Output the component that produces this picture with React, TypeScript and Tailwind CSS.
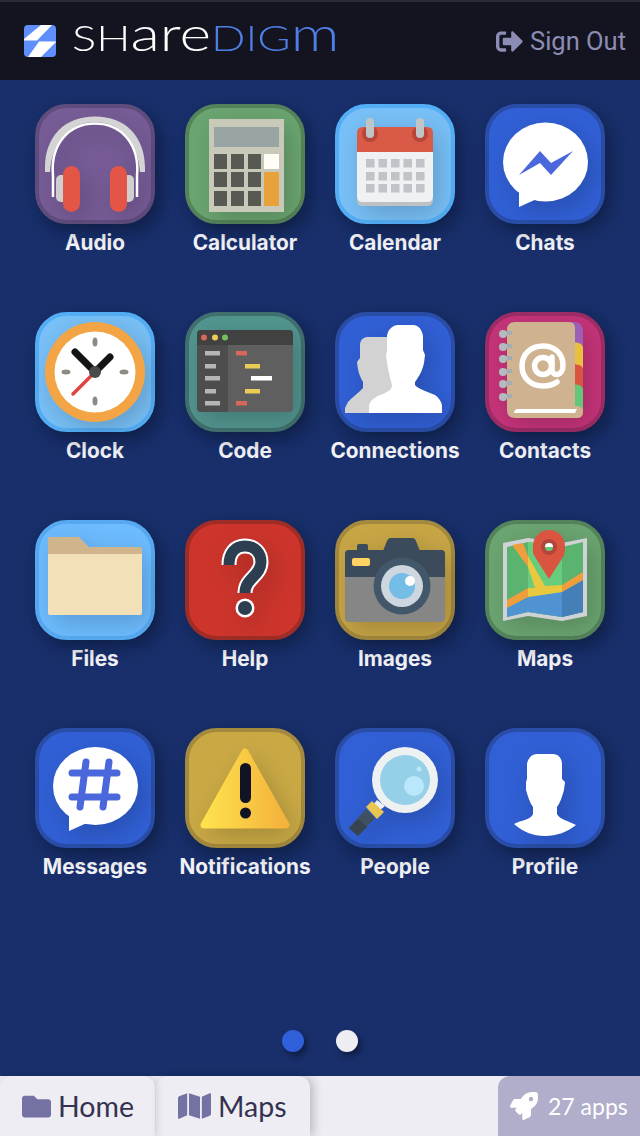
import type { ReactNode } from "react";
import { FaFolder, FaMap, FaRocket, FaSignOutAlt } from "react-icons/fa";

const BLUE = "bg-[#3160d6] border-[#2a4ea8]";

function Svg({ children }: { children: ReactNode }) {
  return (
    <svg viewBox="0 0 120 120" className="absolute -inset-[4px] h-[120px] w-[120px] drop-shadow-[6px_8px_12px_rgba(0,0,0,0.18)]">
      {children}
    </svg>
  );
}

function AudioIcon() {
  return (
    <Svg>
      <path d="M10 64 C10 32 30 12.5 60 12.5 C90 12.5 110 32 110 64 L110 68 L105 68 C103 38 86 18 60 18 C34 18 17 38 15 68 L10 68 Z" fill="#d4d4d4" />
      <path d="M18 93 L18 72 C15 40 34 19.5 60 19.5 C86 19.5 105 40 102 72 L102 93" fill="none" stroke="#fff" strokeWidth="2.5" />
      <rect x="21" y="71" width="12" height="27" rx="5" fill="#cfcfcf" />
      <rect x="87" y="71" width="12" height="27" rx="5" fill="#cfcfcf" />
      <rect x="28" y="62" width="17" height="46" rx="8.5" fill="#e35547" />
      <rect x="75" y="62" width="17" height="46" rx="8.5" fill="#e35547" />
    </Svg>
  );
}

function CalculatorIcon() {
  const keys = [
    [29, 50], [46, 50], [63, 50],
    [29, 68], [46, 68], [63, 68],
    [29, 87], [46, 87], [63, 87],
  ];
  return (
    <Svg>
      <rect x="24" y="15" width="75" height="93" fill="#c9c9ba" />
      <rect x="29" y="23" width="65" height="20" fill="#99a5a5" />
      {keys.map(([x, y]) => (
        <rect key={`${x}-${y}`} x={x} y={y} width="13" height="15" fill="#575a52" />
      ))}
      <rect x="79" y="50" width="15" height="15" fill="#fffdf7" />
      <rect x="79" y="68" width="15" height="34" fill="#e8a23c" />
    </Svg>
  );
}

function CalendarIcon() {
  const xs = [31, 43.5, 56, 68.5, 81];
  const ys = [55, 68, 80];
  return (
    <Svg>
      <path d="M22 90 H98 V96 Q98 102 92 102 H28 Q22 102 22 96 Z" fill="#bdc1c4" />
      <path d="M22 48 H98 V92 Q98 98 92 98 H28 Q22 98 22 92 Z" fill="#eff1f2" />
      <path d="M28 23 H92 Q98 23 98 29 V48 H22 V29 Q22 23 28 23 Z" fill="#d95b47" />
      <circle cx="35" cy="30" r="8" fill="#b8453a" />
      <circle cx="85" cy="30" r="8" fill="#b8453a" />
      <rect x="31" y="14" width="8" height="20" rx="4" fill="#bfc5c7" />
      <rect x="81" y="14" width="8" height="20" rx="4" fill="#bfc5c7" />
      {ys.map((y) =>
        xs.map((x) => <rect key={`${x}-${y}`} x={x} y={y} width="8.5" height="8.5" fill="#c0c3c7" />),
      )}
    </Svg>
  );
}

function ChatsIcon() {
  return (
    <Svg>
      <ellipse cx="60.5" cy="58" rx="42.5" ry="39.5" fill="#fff" />
      <path d="M34 85 V103 L54 94 Z" fill="#fff" />
      <path d="M34 71 L55 47 L66 59 L88 47 L66 71 L55 59 Z" fill="#4b67dc" />
    </Svg>
  );
}

function ClockIcon() {
  return (
    <Svg>
      <circle cx="60" cy="60" r="50" fill="#f3a445" />
      <circle cx="60" cy="60" r="40.5" fill="#fff" />
      <ellipse cx="60" cy="30" rx="2.5" ry="4.5" fill="#8b8b84" />
      <ellipse cx="60" cy="89" rx="2.5" ry="4.5" fill="#8b8b84" />
      <ellipse cx="31" cy="60" rx="4.5" ry="2.5" fill="#8b8b84" />
      <ellipse cx="89" cy="60" rx="4.5" ry="2.5" fill="#8b8b84" />
      <path d="M60 60 L38 82" stroke="#e0443f" strokeWidth="3.5" strokeLinecap="round" />
      <path d="M40 40 L60 60 L75 45" fill="none" stroke="#141414" strokeWidth="7" strokeLinecap="round" strokeLinejoin="round" />
      <circle cx="60" cy="60" r="6" fill="#4a4a4a" />
    </Svg>
  );
}

function CodeIcon() {
  const side = [[39, 15], [52, 11], [64, 15], [77, 11], [89, 15]];
  return (
    <Svg>
      <rect x="12" y="18" width="96" height="82" rx="4" fill="#5f5f5f" />
      <path d="M12 33 H43 V100 H16 Q12 100 12 96 Z" fill="#4d4d4d" />
      <path d="M16 18 H104 Q108 18 108 22 V33 H12 V22 Q12 18 16 18 Z" fill="#414141" />
      <circle cx="19" cy="25.5" r="3" fill="#d8675a" />
      <circle cx="30" cy="25.5" r="3" fill="#e9cb58" />
      <circle cx="40" cy="25.5" r="3" fill="#74bd62" />
      {side.map(([y, w]) => (
        <rect key={y} x="20" y={y} width={w} height="4.5" fill="#b5b5b5" />
      ))}
      <rect x="51" y="39" width="11" height="4.5" fill="#d8675a" />
      <rect x="60" y="52" width="15" height="4.5" fill="#e9cb58" />
      <rect x="66" y="64" width="21" height="4.5" fill="#fff" />
      <rect x="60" y="77" width="15" height="4.5" fill="#e9cb58" />
      <rect x="51" y="89" width="11" height="4.5" fill="#d8675a" />
    </Svg>
  );
}

function ConnectionsIcon() {
  return (
    <Svg>
      <path d="M10 101 V96 L13 90 C17 85 24 81 28 76 V70 C25 65 23 60 22 50 L25 46 V32 C26 27 29 25 33 25 H52 L60 72 L50 85 L34 101 Z" fill="#d2d2d2" />
      <path d="M34 101 V93 C36 87 42 84 50 81 C54 79 57 77 57 73 C55 66 53 58 52 50 L51 43 L52 38 V24 C53 17 58 13 63 13 H78 C84 13 87 18 88 24 V38 L90 43 L89 51 C87 60 83 66 80 70 V73 C82 76 92 80 100 83 C104 86 106 89 107 93 V101 Z" fill="#fff" />
    </Svg>
  );
}

function ContactsIcon() {
  const rings = [22, 35, 47, 60, 72, 85];
  return (
    <Svg>
      <path d="M85 10 H90 Q98 11 98 20 V35 H85 Z" fill="#9b5fb5" />
      <path d="M85 30 Q98 30 98 36 V56 H85 Z" fill="#e9bf3f" />
      <path d="M85 52 Q98 52 98 57 V76 H85 Z" fill="#d9553f" />
      <path d="M85 72 Q98 72 98 78 V100 H85 Z" fill="#63c777" />
      <path d="M30 10 H84 Q90 10 90 16 V94 H94 L98 97 V100 Q98 106 92 106 H30 Q22 106 22 98 V18 Q22 10 30 10 Z" fill="#cfb28f" />
      <path d="M32 97 H92 L90 101 H29 Q29 98 32 97 Z" fill="#fff" />
      {rings.map((y) => (
        <g key={y}>
          <rect x="20" y={y - 3} width="7" height="4" fill="#a4adb1" />
          <circle cx="18" cy={y} r="4" fill="#b4bbbf" />
        </g>
      ))}
      <circle cx="58" cy="54" r="8.5" fill="none" stroke="#fff" strokeWidth="5.5" />
      <path d="M67 45 V57 C67 65 78 65 78 53 C78 41 69 34 58 34 C46 34 37 42 37 54 C37 66 46 74 58 74 C64 74 68 73 72 70" fill="none" stroke="#fff" strokeWidth="5.5" strokeLinecap="round" />
    </Svg>
  );
}

function FilesIcon() {
  return (
    <Svg>
      <path d="M15 17 H44 L54 27 H105 Q107 27 107 30 V60 H13 V19 Q13 17 15 17 Z" fill="#cfb48c" />
      <path d="M13 34 H107 V93 Q107 95 105 95 H15 Q13 95 13 93 Z" fill="#f2e0b9" />
    </Svg>
  );
}

function HelpIcon() {
  const d = "M44 45 C44 33 50 26 60 26 C70 26 76 33 76 42 C76 56 60 58 60 73";
  return (
    <Svg>
      <path d={d} fill="none" stroke="#fff" strokeWidth="15" />
      <circle cx="60" cy="88" r="9.5" fill="#fff" />
      <path d={d} fill="none" stroke="#2c3e50" strokeWidth="11" />
      <circle cx="60" cy="88" r="7" fill="#2c3e50" />
    </Svg>
  );
}

function ImagesIcon() {
  return (
    <Svg>
      <rect x="22" y="24" width="11" height="8" rx="2" fill="#3b4b5c" />
      <path d="M48 31 L52 21 Q53 18 56 18 H77 Q80 18 81 21 L85 31 Z" fill="#3b4b5c" />
      <rect x="10" y="30" width="100" height="72" rx="4" fill="#868686" />
      <path d="M14 30 H106 Q110 30 110 34 V57 H10 V34 Q10 30 14 30 Z" fill="#3b4b5c" />
      <rect x="17" y="38" width="18" height="8" rx="2" fill="#ffd262" />
      <circle cx="67" cy="66" r="28.5" fill="#43576a" />
      <circle cx="67" cy="66" r="21" fill="#ced6e0" />
      <circle cx="67" cy="66" r="13" fill="#74bde6" />
      <circle cx="75" cy="61" r="5" fill="#fff" />
    </Svg>
  );
}

function MapsIcon() {
  return (
    <Svg>
      <path d="M18 23 L43 18 L77 23 L102 18 V96 L77 101 L43 96 L18 101 Z" fill="#d0d3d6" />
      <path d="M22 27 L43 22 L77 27 L98 22 V92 L77 97 L43 92 L22 97 Z" fill="#5bb370" />
      <path d="M43 22 L77 27 V97 L43 92 Z" fill="#68cc7d" />
      <path d="M22 88 L43 77 L77 72 L98 60 V92 L77 97 L43 92 L22 97 Z" fill="#4f93d3" />
      <path d="M77 72 L98 60 V92 L77 97 Z" fill="#447fb8" />
      <path d="M22 80 L43 68 V77 L22 88 Z" fill="#ee9f3c" />
      <path d="M77 65 L98 52 V60 L77 72 Z" fill="#ee9f3c" />
      <path d="M27 25 L38 23 L43 36 V47 Z" fill="#ee9f3c" />
      <path d="M43 36 L60 66 L77 65 V72 L43 77 V68 L50 68 L43 47 Z" fill="#e9c83f" />
      <path d="M64 59 L50 37 C47 32 48 30 48 26 C48 17 55 10 64 10 C73 10 80 17 80 26 C80 30 80 33 78 37 Z" fill="#d9553f" />
      <circle cx="64" cy="27" r="8" fill="#b5453a" />
      <circle cx="64" cy="27" r="4" fill="#63c777" />
      <path d="M60 27 A4 4 0 0 1 68 27 Z" fill="#fff" />
    </Svg>
  );
}

function MessagesIcon() {
  return (
    <Svg>
      <ellipse cx="60.5" cy="58" rx="42.5" ry="39" fill="#fff" />
      <path d="M34 85 V103 L54 94 Z" fill="#fff" />
      <path d="M51 34 L45 79 M74 34 L68 79 M37 45 H82 M37 69 H82" fill="none" stroke="#4b67dc" strokeWidth="7" strokeLinecap="round" />
    </Svg>
  );
}

function NotificationsIcon() {
  return (
    <Svg>
      <defs>
        <linearGradient id="warn" x1="0" x2="1" y1="0" y2="0">
          <stop offset="0" stopColor="#ffe14d" />
          <stop offset="1" stopColor="#f3b23c" />
        </linearGradient>
      </defs>
      <path d="M60 24 L101 97 H19 Z" fill="url(#warn)" stroke="url(#warn)" strokeWidth="7" strokeLinejoin="round" />
      <rect x="55" y="35" width="11" height="40" rx="5.5" fill="#111424" />
      <circle cx="60.5" cy="85" r="5.5" fill="#111424" />
    </Svg>
  );
}

function PeopleIcon() {
  return (
    <Svg>
      <path d="M42 72 L38 77 L44 83 L50 78 Z" fill="#eef1f2" />
      <path d="M14 100 L23 108 L40 90 L31 81 Z" fill="#3f5060" />
      <path d="M14 100 L23 108 L32 99 L23 91 Z" fill="#37434f" />
      <path d="M32 79 L37 74 L48 84 L42 90 Z" fill="#e9c552" stroke="#e9c552" strokeWidth="1.5" strokeLinejoin="round" />
      <circle cx="70" cy="52" r="33" fill="#eef1f2" />
      <circle cx="70" cy="52" r="25" fill="#95cfe8" />
      <circle cx="79" cy="58" r="10" fill="#b9e7fb" />
      <circle cx="84" cy="41" r="2.5" fill="#b9e7fb" />
    </Svg>
  );
}

function ProfileIcon() {
  return (
    <Svg>
      <path d="M29 96 C36 92 46 92 48 86 V79 C45 75 43 69 41 62 V54 L42 51 V36 C43 30 47 26 52 26 H68 C73 26 77 30 77 36 V51 L80 54 L79 62 C77 69 75 75 72 79 V86 C75 92 84 93 91 97 C82 104 72 108 60 108 C48 108 38 104 29 96 Z" fill="#fff" />
    </Svg>
  );
}

const apps = [
  { label: "Audio", tile: "bg-[#775c97] border-[#5f4d7e]", icon: <AudioIcon /> },
  { label: "Calculator", tile: "bg-[#6ba571] border-[#55845b]", icon: <CalculatorIcon /> },
  { label: "Calendar", tile: "bg-[#78c0f7] border-[#54aef5]", icon: <CalendarIcon /> },
  { label: "Chats", tile: BLUE, icon: <ChatsIcon /> },
  { label: "Clock", tile: "bg-[#78c0f7] border-[#54aef5]", icon: <ClockIcon /> },
  { label: "Code", tile: "bg-[#52958f] border-[#41716f]", icon: <CodeIcon /> },
  { label: "Connections", tile: BLUE, icon: <ConnectionsIcon /> },
  { label: "Contacts", tile: "bg-[#c6347a] border-[#9e2d66]", icon: <ContactsIcon /> },
  { label: "Files", tile: "bg-[#6dbcff] border-[#57aaf2]", icon: <FilesIcon /> },
  { label: "Help", tile: "bg-[#cd352c] border-[#9f2d27]", icon: <HelpIcon /> },
  { label: "Images", tile: "bg-[#c8a646] border-[#a48a3e]", icon: <ImagesIcon /> },
  { label: "Maps", tile: "bg-[#6ba571] border-[#55845b]", icon: <MapsIcon /> },
  { label: "Messages", tile: BLUE, icon: <MessagesIcon /> },
  { label: "Notifications", tile: "bg-[#caa945] border-[#a48a3e]", icon: <NotificationsIcon /> },
  { label: "People", tile: BLUE, icon: <PeopleIcon /> },
  { label: "Profile", tile: BLUE, icon: <ProfileIcon /> },
];

function LogoMark() {
  return (
    <svg viewBox="0 0 32 32" className="h-8 w-8 shrink-0">
      <rect width="32" height="32" rx="4" fill="#5f8ffb" />
      <path d="M17 0 H28 L13 15.5 H0 V14 Z" fill="#fff" />
      <path d="M15 16.5 H32 V17 L17 32 H4 Z" fill="#fff" />
    </svg>
  );
}

export default function App() {
  return (
    <div className="flex h-[1136px] w-[640px] flex-col overflow-hidden bg-[#182f6b] font-['Inter',sans-serif]">
      {/* Top bar */}
      <header className="flex h-20 shrink-0 items-center justify-between border-t-2 border-[#2b2b33] bg-[#13141f] pl-6 pr-[14px]">
        <div className="flex items-center">
          <LogoMark />
          <div className="mb-4 ml-4 flex origin-left scale-x-[1.26] items-baseline whitespace-nowrap font-['Lato',sans-serif] font-light leading-none">
            <span className="text-[36px] text-white">SH</span>
            <span className="text-[48px] text-white">are</span>
            <span className="text-[36px] text-[#4f7fe6]">DIG</span>
            <span className="text-[48px] text-[#4f7fe6]">m</span>
          </div>
        </div>
        <div className="flex items-center gap-[7px] font-['Roboto',sans-serif] text-[25.5px] text-[#8c8cb4]">
          <FaSignOutAlt className="h-[27px] w-[27px]" />
          <span>Sign Out</span>
        </div>
      </header>

      {/* App grid */}
      <main className="flex flex-1 flex-col">
        <div className="grid grid-cols-[repeat(4,120px)] gap-x-[30px] auto-rows-[208px] px-[35px] pt-6">
          {apps.map((app) => (
            <div key={app.label} className="flex flex-col items-center">
              <div className={`relative h-[120px] w-[120px] shrink-0 rounded-[32px] border-4 shadow-[5px_7px_18px_rgba(0,0,0,0.32)] ${app.tile}`}>
                {app.icon}
              </div>
              <span className="mt-[6px] whitespace-nowrap text-[20.8px] font-bold leading-[26px] text-[#f2f2f7]">{app.label}</span>
            </div>
          ))}
        </div>

        {/* Pager */}
        <div className="mt-auto flex justify-center gap-8 pb-6">
          <span className="h-[22px] w-[22px] rounded-full bg-[#2f5fd9] shadow-[3px_4px_6px_rgba(0,0,0,0.4)]" />
          <span className="h-[22px] w-[22px] rounded-full bg-[#eeedf3] shadow-[3px_4px_6px_rgba(0,0,0,0.4)]" />
        </div>
      </main>

      {/* Footer */}
      <footer className="flex h-[60px] shrink-0 items-stretch bg-[#eeedf3] font-['Lato',sans-serif] text-[28.5px] text-[#34324f]">
        <div className="flex w-[155px] items-center gap-[7px] rounded-t-xl pl-[22px] shadow-[2px_0_8px_rgba(0,0,0,0.12)]">
          <FaFolder className="h-[29px] w-[29px] text-[#7472a3]" />
          <span>Home</span>
        </div>
        <div className="ml-px flex w-[154px] items-center gap-[7px] rounded-t-xl pl-[22px] shadow-[4px_0_10px_rgba(0,0,0,0.2)]">
          <FaMap className="h-[30px] w-[33px] text-[#7472a3]" />
          <span>Maps</span>
        </div>
        <div className="ml-auto flex w-[142px] items-center gap-[10px] rounded-tl-xl bg-[#b0aeca] pl-3 text-[23px] text-white">
          <FaRocket className="h-7 w-7" />
          <span>27 apps</span>
        </div>
      </footer>
    </div>
  );
}
